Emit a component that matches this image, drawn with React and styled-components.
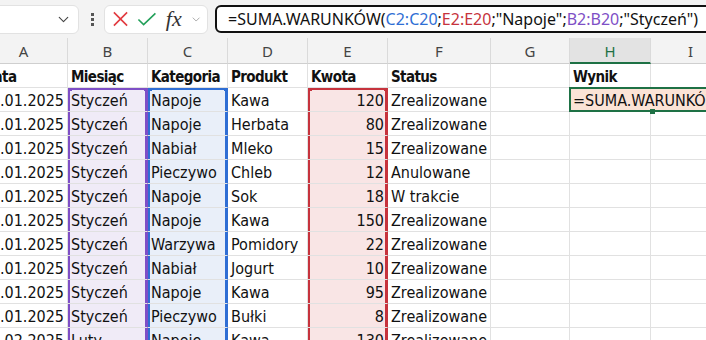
import styled, { createGlobalStyle, css } from "styled-components"
import { ChevronDown } from "lucide-react"

const GlobalStyle = createGlobalStyle`
  html, body { margin: 0; padding: 0; background: #fff; }
  * { box-sizing: border-box; }
`

const CELL_FONT = `"DejaVu Sans Condensed", "Liberation Sans", sans-serif`
const UI_FONT = `"Noto Sans", "Liberation Sans", sans-serif`
const COLUMNS = "88px 80px 80px 80px 80px 103px 79px 81px 80px"

const ranges = {
  purple: { line: "#7e4fc6", fill: "#f0ebf7" },
  blue: { line: "#2f6ed4", fill: "#e9eff9" },
  red: { line: "#c6333d", fill: "#f9e5e5" },
}

const Window = styled.div`
  width: 706px;
  height: 340px;
  overflow: hidden;
  background: #fff;
`

const Toolbar = styled.div`
  display: flex;
  align-items: center;
  height: 38px;
  background: #f3f3f3;
  font-family: ${UI_FONT};
`

const NameBox = styled.div`
  display: flex;
  align-items: center;
  justify-content: space-between;
  margin-left: -52px;
  width: 131px;
  height: 29px;
  padding: 0 6px 0 8px;
  background: #fff;
  border: 1px solid #e2e2e2;
  border-radius: 6px;
  font-size: 15px;
  color: #222;
`

const Dots = styled.div`
  display: flex;
  flex-direction: column;
  gap: 2px;
  margin: 0 10px 0 12px;
  span {
    width: 3px;
    height: 3px;
    background: #555;
  }
`

const ButtonGroup = styled.div`
  display: flex;
  align-items: center;
  gap: 8px;
  width: 104px;
  height: 29px;
  padding: 0 5px 0 7px;
  background: #fff;
  border: 1px solid #e2e2e2;
  border-radius: 6px;
`

const Fx = styled.span`
  font-family: "Liberation Serif", serif;
  font-style: italic;
  font-size: 22px;
  line-height: 1;
  color: #333;
  margin-left: 1px;
`

const FormulaBox = styled.div`
  flex: 1;
  display: flex;
  align-items: center;
  height: 28px;
  margin: 0 -20px 0 7px;
  padding-left: 11px;
  background: #fff;
  border: 2px solid #111;
  border-radius: 6px;
  font-size: 16px;
  color: #111;
  white-space: nowrap;
  overflow: hidden;
`

const Ref = styled.span`
  color: ${p => ranges[p.$range].line};
`

const Sheet = styled.div`
  margin-left: -20px;
  font-family: ${CELL_FONT};
`

const Row = styled.div`
  display: grid;
  grid-template-columns: ${COLUMNS};
  height: ${p => (p.$header ? 26 : 24)}px;
`

const ColHead = styled.div`
  display: flex;
  align-items: center;
  justify-content: center;
  padding-top: 1px;
  background: ${p => (p.$selected ? "#e3e3e3" : "#f3f3f3")};
  border-right: 1px solid #dadada;
  border-bottom: ${p => (p.$selected ? "2px solid #1e7145" : "1px solid #cfcfcf")};
  color: ${p => (p.$selected ? "#1e7145" : "#444")};
  font-family: ${UI_FONT};
  font-size: 15px;
`

const Cell = styled.div`
  position: relative;
  display: flex;
  align-items: center;
  justify-content: ${p => (p.$right ? "flex-end" : "flex-start")};
  padding: 2px 3px 0;
  border-right: 1px solid #e1e1e1;
  border-bottom: 1px solid #e1e1e1;
  font-size: ${p => (p.$bold ? 15 : 16)}px;
  font-weight: ${p => (p.$bold ? 700 : 400)};
  letter-spacing: ${p => (p.$bold ? "-0.6px" : "0")};
  color: #111;
  white-space: nowrap;
  overflow: ${p => (p.$active ? "visible" : "hidden")};
  ${p => p.$range && css`
    background: ${ranges[p.$range].fill};
    box-shadow: inset 2px 0 0 ${ranges[p.$range].line}, inset -2px 0 0 ${ranges[p.$range].line}
      ${p.$top ? `, inset 0 2px 0 ${ranges[p.$range].line}` : ""};
    border-right-color: ${ranges[p.$range].line};
  `}
  ${p => p.$top && css`
    &::before, &::after {
      content: "";
      position: absolute;
      top: -2px;
      width: 5px;
      height: 5px;
      background: ${ranges[p.$range].line};
    }
    &::before { left: -1px; }
    &::after { right: -2px; }
  `}
`

const Editor = styled.div`
  position: absolute;
  left: -1px;
  top: -1px;
  bottom: -1px;
  width: 160px;
  display: flex;
  align-items: center;
  padding: 2px 0 0 2px;
  background: #fbe3d6;
  border: 2px solid #1e7145;
  border-right: none;
  z-index: 2;
  &::after {
    content: "";
    position: absolute;
    left: 79px;
    bottom: -4px;
    width: 5px;
    height: 5px;
    background: #1e7145;
  }
`

const letters = ["A", "B", "C", "D", "E", "F", "G", "H", "I"]

const data = [
  ["01.01.2025", "Styczeń", "Napoje", "Kawa", 120, "Zrealizowane"],
  ["02.01.2025", "Styczeń", "Napoje", "Herbata", 80, "Zrealizowane"],
  ["03.01.2025", "Styczeń", "Nabiał", "Mleko", 15, "Zrealizowane"],
  ["04.01.2025", "Styczeń", "Pieczywo", "Chleb", 12, "Anulowane"],
  ["05.01.2025", "Styczeń", "Napoje", "Sok", 18, "W trakcie"],
  ["06.01.2025", "Styczeń", "Napoje", "Kawa", 150, "Zrealizowane"],
  ["07.01.2025", "Styczeń", "Warzywa", "Pomidory", 22, "Zrealizowane"],
  ["08.01.2025", "Styczeń", "Nabiał", "Jogurt", 10, "Zrealizowane"],
  ["09.01.2025", "Styczeń", "Napoje", "Kawa", 95, "Zrealizowane"],
  ["10.01.2025", "Styczeń", "Pieczywo", "Bułki", 8, "Zrealizowane"],
  ["01.02.2025", "Luty", "Napoje", "Kawa", 130, "Zrealizowane"],
]

function App() {
  return (
    <Window>
      <GlobalStyle />
      <Toolbar>
        <NameBox>
          SUMA
          <ChevronDown size={17} color="#444" strokeWidth={1.6} />
        </NameBox>
        <Dots><span /><span /><span /></Dots>
        <ButtonGroup>
          <svg width="18" height="18" viewBox="0 0 18 18">
            <path d="M2 2 L16 16 M16 2 L2 16" stroke="#e23b40" strokeWidth="1.7" fill="none" />
          </svg>
          <svg width="21" height="16" viewBox="0 0 21 16">
            <path d="M1.5 8.5 L7 14 L19.5 2" stroke="#23a05a" strokeWidth="1.7" fill="none" />
          </svg>
          <Fx>fx</Fx>
          <ChevronDown size={13} color="#999" strokeWidth={1.6} />
        </ButtonGroup>
        <FormulaBox>
          =SUMA.WARUNKÓW(<Ref $range="blue">C2:C20</Ref>;<Ref $range="red">E2:E20</Ref>;"Napoje";
          <Ref $range="purple">B2:B20</Ref>;"Styczeń")
        </FormulaBox>
      </Toolbar>
      <Sheet>
        <Row $header>
          {letters.map(l => <ColHead key={l} $selected={l === "H"}>{l}</ColHead>)}
        </Row>
        <Row>
          <Cell $bold>Data</Cell>
          <Cell $bold>Miesiąc</Cell>
          <Cell $bold>Kategoria</Cell>
          <Cell $bold>Produkt</Cell>
          <Cell $bold>Kwota</Cell>
          <Cell $bold>Status</Cell>
          <Cell />
          <Cell $bold>Wynik</Cell>
          <Cell />
        </Row>
        {data.map((r, i) => (
          <Row key={i}>
            <Cell $right>{r[0]}</Cell>
            <Cell $range="purple" $top={i === 0}>{r[1]}</Cell>
            <Cell $range="blue" $top={i === 0}>{r[2]}</Cell>
            <Cell>{r[3]}</Cell>
            <Cell $range="red" $top={i === 0} $right>{r[4]}</Cell>
            <Cell>{r[5]}</Cell>
            <Cell />
            <Cell $active={i === 0}>
              {i === 0 && <Editor>=SUMA.WARUNKÓW(</Editor>}
            </Cell>
            <Cell />
          </Row>
        ))}
      </Sheet>
    </Window>
  )
}

export default App
